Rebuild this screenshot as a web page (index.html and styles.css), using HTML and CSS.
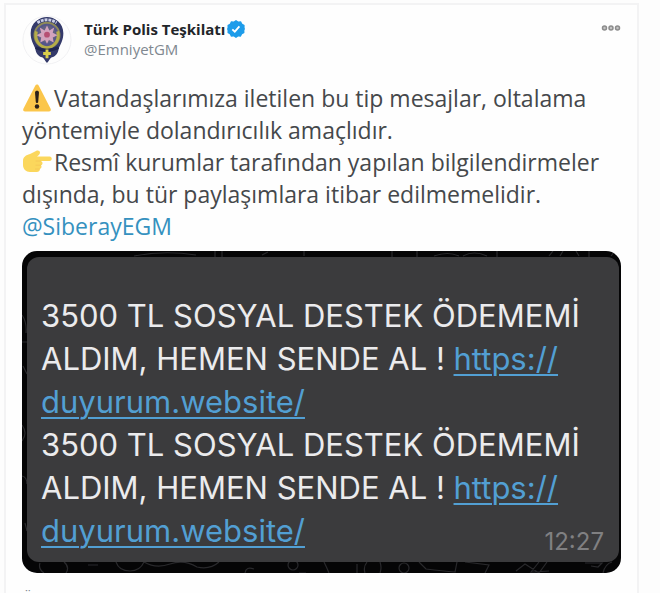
FILE: index.html
```html
<!DOCTYPE html>
<html lang="tr">
<head>
<meta charset="utf-8">
<title>Türk Polis Teşkilatı</title>
<link rel="stylesheet" href="styles.css">
</head>
<body>
<article class="tweet">
  <header class="head">
    <svg class="avatar" viewBox="0 0 52 52" aria-hidden="true">
      <circle cx="26" cy="26" r="25" fill="#fdfdfd" stroke="#f0f0f2"/>
      <path d="M26 2c8 0 17 6 17 17 0 7-3 12-5 16 0 4-3 8-7 9-2 1-3 4-5 6-2-2-3-5-5-6-4-1-7-5-7-9-2-4-5-9-5-16C9 8 18 2 26 2z" fill="#343a6a"/>
      <path d="M16 8q10-6 20 0" fill="none" stroke="#c9cde4" stroke-width="3" stroke-dasharray="3 1"/>
      <circle cx="26" cy="21" r="13" fill="#54558a" stroke="#8e8a58" stroke-width="2"/>
      <path d="M15 17c-2 8 2 16 11 17 9-1 13-9 11-17" fill="none" stroke="#b5ad48" stroke-width="3"/>
      <circle cx="26" cy="20" r="9" fill="#626081"/>
      <path d="M26 11l2.500 5 5-3-1.500 5.500 5 2.500-5 2.500 1 5-5-2.500-2 4-2-4-5 2.500 1-5-5-2.500 5-2.500-1.500-5.500 5 3z" fill="#d2a3bd"/>
      <circle cx="26" cy="20.500" r="3" fill="#b64f73"/>
      <path d="M14 34q12 5 24 0" fill="none" stroke="#20264f" stroke-width="3"/>
      <path d="M26 36v9M22 40h8" stroke="#d9cf4c" stroke-width="3"/>
    </svg>
    <div class="names">
      <div class="name">Türk Polis Teşkilatı
        <svg class="badge" viewBox="0 0 18 18" role="img" aria-label="Onaylı hesap">
          <path d="M9 0l2.300 1.400 2.700-.1 1.300 2.400 2.300 1.300v2.800L18 9l-.6 1.200v2.800l-2.300 1.300-1.300 2.400-2.600-.1L9 18l-2.300-1.400-2.700.1-1.300-2.400L.5 13v-2.800L0 9l.5-1.200V5l2.300-1.300L4 1.300l2.700.1z" fill="#1d9cea"/>
          <path d="M5.300 9.300l2.500 2.400 4.600-5.300" fill="none" stroke="#fff" stroke-width="1.800"/>
        </svg>
      </div>
      <a class="handle" href="#">@EmniyetGM</a>
    </div>
    <button class="more" type="button" aria-label="Daha fazla">
      <svg viewBox="0 0 20 6" aria-hidden="true">
        <g fill="#c4c4c4" stroke="#8c8c8c" stroke-width="1.500"><circle cx="3.500" cy="3" r="2"/><circle cx="10" cy="3" r="2"/><circle cx="16.500" cy="3" r="2"/></g>
      </svg>
    </button>
  </header>

  <p class="text">
    <svg class="emoji" viewBox="0 0 30 30" role="img" aria-label="Uyarı">
      <path d="M15 1.500c.8 0 1.400.5 1.800 1.200l11.800 23c.7 1.400-.1 2.800-1.700 2.800H3.100c-1.600 0-2.400-1.400-1.700-2.800l11.800-23c.4-.7 1-1.200 1.800-1.200z" fill="#fbc64b"/>
      <path d="M13 9.500c0-2.500 4-2.500 4 0l-.8 9.500c-.2 1.300-2.200 1.300-2.400 0z" fill="#2b2019"/>
      <circle cx="15" cy="23.500" r="2.200" fill="#2b2019"/>
    </svg>Vatandaşlarımıza iletilen bu tip mesajlar, oltalama yöntemiyle dolandırıcılık amaçlıdır.<br>
    <svg class="emoji" viewBox="0 0 30 30" role="img" aria-label="Sağı gösteren el">
      <path d="M1 14c0-4 3-6 7-7l6-3c2-1 4 0 4 1.500 0 1.500-1 2.500-3 4h12.500c3 0 3 4.500 0 4.500H19c2 1 2 3.500 0 4.200 1 1.500.5 3.300-1.200 3.800.3 2-1 3-3 3H8c-4 0-7-3-7-7z" fill="#fbd75c"/>
      <path d="M19 14h-5.500M19 18.200h-5.500M17.800 22H13" stroke="#f5c857" stroke-width="1" fill="none"/>
    </svg>Resmî kurumlar tarafından yapılan bilgilendirmeler dışında, bu tür paylaşımlara itibar edilmemelidir.<br>
    <a href="#">@SiberayEGM</a>
  </p>

  <section class="media">
    <svg class="doodles" viewBox="0 0 599 322" preserveAspectRatio="none" aria-hidden="true">
      <g fill="none" stroke="#29292c" stroke-width="1.200">
        <path d="M112 5q30-6 62-1M193 0v6M200 0v6M240 4l6-3M282 0v5M370 0v6M395 0v6M412 5q14-5 25 0M441 5q11-6 24 0M475 0v6M527 5l4-5M538 5l3-5M554 0l3 5M567 0v6M589 5l4-5"/>
        <path d="M0 64q5 7 4 18M0 91h5M1 115l4 8M0 174q6 8 0 16M0 225q5 1 5 8M3 272l2 8"/>
        <path d="M18 312q-2 6 4 10M42 311q6 5 2 11M66 314h10M94 311q3 9 14 9 10 0 14-9M122 311q12 7 26 2t27 3q13 3 22-5M223 322q1-7 9-4M277 322h7M302 311q3 6 5 11M335 313v9M345 311q-4 5-2 11M358 311q2 6 0 11M397 311l7 7q17 2 29 3l2-10M443 311l24 3-4 8M494 320l9-7 14 9 8-11M517 311l-8 10 18-1M563 312h17l-4 4-7-1M590 311q-7 2-9 11"/>
        <circle cx="271" cy="314" r="5"/><circle cx="382" cy="317" r="5"/>
      </g>
    </svg>
    <div class="bubble">
      <p class="message">3500 TL SOSYAL DESTEK ÖDEMEMİ<br>ALDIM, HEMEN SENDE AL ! <a href="#">https://<br>duyurum.website/</a></p>
      <p class="message">3500 TL SOSYAL DESTEK ÖDEMEMİ<br>ALDIM, HEMEN SENDE AL ! <a href="#">https://<br>duyurum.website/</a></p>
      <time class="time">12:27</time>
    </div>
  </section>
  <footer class="foot">Ö</footer>
</article>
</body>
</html>
```
FILE: styles.css
```css
* { box-sizing: border-box; }

body {
  margin: 0;
  height: 100vh;
  overflow: hidden;
  padding: 3px 21px 0 4px;
  background: #fdfdfd;
  font-family: "Open Sans", "Noto Sans", sans-serif;
  color: #45484b;
}

.tweet {
  min-height: 100vh;
  padding: 10px 16px 0;
  border: 2px solid #f3f3f4;
  border-bottom: 0;
  background: #fefefe;
}

.head {
  display: flex;
  align-items: flex-start;
  gap: 12px;
}

.avatar { width: 50px; height: 50px; flex: none; }

.names { flex: 1; padding-top: 4px; }

.name {
  display: flex;
  align-items: center;
  gap: 2px;
  font-size: 15px;
  line-height: 20px;
  font-weight: 700;
  color: #222529;
}

.badge { width: 18px; height: 18px; }

.handle {
  display: block;
  font-size: 15px;
  line-height: 20px;
  color: #808890;
  text-decoration: none;
}

.more {
  margin-top: 10px;
  padding: 0;
  border: 0;
  background: none;
  line-height: 0;
}

.more svg { width: 20px; height: 6px; }

.text {
  margin: 17px 0 9px;
  font-size: 23px;
  line-height: 32px;
}

.text a { color: #3591bf; text-decoration: none; }

.emoji {
  width: 30px;
  height: 30px;
  margin: -4px 2px -4px 0;
  vertical-align: -2px;
}

.media {
  position: relative;
  padding: 6px 2px 11px 5px;
  border-radius: 15px;
  overflow: hidden;
  background: #050506;
}

.doodles {
  position: absolute;
  inset: 0;
  width: 100%;
  height: 100%;
}

.bubble {
  position: relative;
  padding: 37px 14px 10px;
  border-radius: 12px;
  background: #3b3b3d;
  font-family: Inter, "Liberation Sans", sans-serif;
}

.message {
  margin: 0;
  font-size: 31px;
  line-height: 43px;
  color: #ebebed;
  white-space: nowrap;
}

.message a {
  color: #529fd3;
  text-decoration-thickness: 2px;
  text-underline-offset: 4px;
}

.time {
  position: absolute;
  right: 15px;
  bottom: 6px;
  font-size: 24px;
  line-height: 28px;
  color: #808082;
}

.foot {
  margin-top: 14px;
  font-size: 15px;
  line-height: 20px;
  color: #808890;
}
```
